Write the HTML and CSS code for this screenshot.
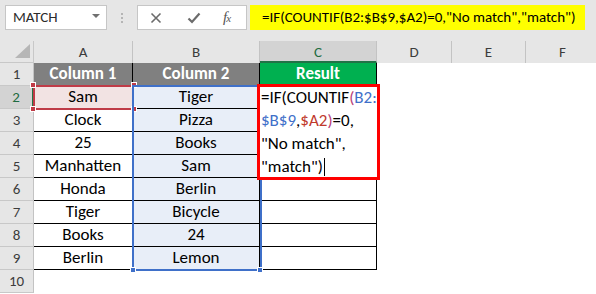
FILE: index.html
```html
<!DOCTYPE html>
<html>
<head>
<meta charset="utf-8">
<link rel="stylesheet" href="styles.css">
</head>
<body>
<div class="app">
  <div class="toolbar">
    <div class="namebox"><span>MATCH</span><svg class="dd" width="8" height="5" viewBox="0 0 8 5"><path d="M0 0H8L4 4Z" fill="#707070"/></svg></div>
    <div class="grip"><i></i><i></i><i></i></div>
    <div class="fxbox">
      <svg width="12" height="12" viewBox="0 0 12 12" class="ic-x"><path d="M1.5 1.5L10.5 10.5M10.5 1.5L1.5 10.5" stroke="#6b6b6b" stroke-width="1.6" fill="none"/></svg>
      <svg width="14" height="12" viewBox="0 0 14 12" class="ic-ok"><path d="M1.5 6.5L5 10L12.5 1.5" stroke="#6b6b6b" stroke-width="2.2" fill="none"/></svg>
      <span class="fx">f<small>x</small></span>
    </div>
    <div class="formula">=IF(COUNTIF(B2:$B$9,$A2)=0,"No match","match")</div>
  </div>

  <div class="sheet">
    <div class="corner"></div>
    <div class="colh">A</div>
    <div class="colh">B</div>
    <div class="colh active">C</div>
    <div class="colh">D</div>
    <div class="colh">E</div>
    <div class="colh">F</div>

    <div class="rowh">1</div>
    <div class="c hd">Column 1</div>
    <div class="c hd">Column 2</div>
    <div class="c hd green">Result</div>
    <div class="e"></div><div class="e"></div><div class="e"></div>

    <div class="rowh active">2</div>
    <div class="c pink">Sam</div>
    <div class="c blue">Tiger</div>
    <div class="c"></div>
    <div class="e"></div><div class="e"></div><div class="e"></div>

    <div class="rowh">3</div>
    <div class="c">Clock</div>
    <div class="c blue">Pizza</div>
    <div class="c"></div>
    <div class="e"></div><div class="e"></div><div class="e"></div>

    <div class="rowh">4</div>
    <div class="c">25</div>
    <div class="c blue">Books</div>
    <div class="c"></div>
    <div class="e"></div><div class="e"></div><div class="e"></div>

    <div class="rowh">5</div>
    <div class="c">Manhatten</div>
    <div class="c blue">Sam</div>
    <div class="c"></div>
    <div class="e"></div><div class="e"></div><div class="e"></div>

    <div class="rowh">6</div>
    <div class="c">Honda</div>
    <div class="c blue">Berlin</div>
    <div class="c"></div>
    <div class="e"></div><div class="e"></div><div class="e"></div>

    <div class="rowh">7</div>
    <div class="c">Tiger</div>
    <div class="c blue">Bicycle</div>
    <div class="c"></div>
    <div class="e"></div><div class="e"></div><div class="e"></div>

    <div class="rowh">8</div>
    <div class="c">Books</div>
    <div class="c blue">24</div>
    <div class="c"></div>
    <div class="e"></div><div class="e"></div><div class="e"></div>

    <div class="rowh">9</div>
    <div class="c">Berlin</div>
    <div class="c blue">Lemon</div>
    <div class="c"></div>
    <div class="e"></div><div class="e"></div><div class="e"></div>

    <div class="rowh">10</div>
    <div class="e"></div><div class="e"></div><div class="e"></div>
    <div class="e"></div><div class="e"></div><div class="e"></div>

    <div class="ref-a"></div>
    <span class="hdl hdl-red h-a1"></span>
    <span class="hdl hdl-red h-a2"></span>
    <span class="hdl hdl-red h-a3"></span>
    <span class="hdl hdl-red h-a4"></span>

    <div class="ref-b"></div>
    <span class="hdl hdl-blue h-b1"></span>
    <span class="hdl hdl-blue h-b2"></span>

    <div class="editor">
      <div>=IF(COUNTIF<span class="par">(</span><span class="rb">B2:</span></div>
      <div><span class="rb">$B$9</span>,<span class="rr">$A2</span><span class="par">)</span>=0,</div>
      <div>"No match",</div>
      <div>"match")<span class="caret"></span></div>
    </div>
    <div class="mark"></div>
  </div>
</div>
</body>
</html>
```
FILE: styles.css
```css
html, body {
  margin: 0;
  padding: 0;
  background: #ffffff;
}
.app {
  width: 596px;
  height: 294px;
  overflow: hidden;
  font-family: Carlito, "Liberation Sans", sans-serif;
}

/* ---------- toolbar ---------- */
.toolbar {
  height: 41px;
  background: #e6e6e6;
  box-sizing: border-box;
  padding: 5px 0 0 5px;
  display: flex;
  align-items: flex-start;
}
.namebox {
  width: 102px;
  height: 25px;
  box-sizing: border-box;
  background: #fff;
  border: 1px solid #c6c6c6;
  display: flex;
  align-items: center;
  justify-content: space-between;
  padding: 0 6px 1px 7px;
  font-size: 15px;
  color: #2b2b2b;
}
.namebox .dd { margin-top: -2px; }
.grip {
  width: 30px;
  height: 25px;
  display: flex;
  flex-direction: column;
  align-items: center;
  justify-content: center;
  gap: 2px;
}
.grip i {
  display: block;
  width: 2px;
  height: 2px;
  background: #b5b5b5;
}
.fxbox {
  width: 110px;
  height: 25px;
  box-sizing: border-box;
  background: #fff;
  border: 1px solid #c6c6c6;
  display: flex;
  align-items: center;
  padding-left: 12px;
}
.ic-x { margin-right: 25px; }
.ic-ok { margin-right: 22px; margin-top: 1px; }
.fx {
  font-family: "Liberation Serif", serif;
  font-style: italic;
  font-size: 15px;
  color: #555;
  letter-spacing: -1px;
}
.fx small { font-size: 11px; }
.formula {
  margin-left: 3px;
  width: 335px;
  height: 25px;
  box-sizing: border-box;
  background: #ffff00;
  padding-left: 12px;
  font-size: 15px;
  line-height: 24px;
  color: #000;
  white-space: nowrap;
}

/* ---------- sheet ---------- */
.sheet {
  position: relative;
  display: grid;
  grid-template-columns: 34px 99px 127px 117px 75px 74px 74px;
  grid-template-rows: 22px repeat(10, 23px);
}
.corner {
  background: #e6e6e6;
  border-right: 1px solid #c8c8c8;
  border-bottom: 1px solid #c8c8c8;
  box-sizing: border-box;
  position: relative;
}
.corner::after {
  content: "";
  position: absolute;
  right: 3px;
  bottom: 4px;
  width: 0;
  height: 0;
  border-left: 15px solid transparent;
  border-bottom: 14px solid #b6b6b6;
}
.colh {
  background: #e6e6e6;
  border-right: 1px solid #c3c3c3;
  box-sizing: border-box;
  text-align: center;
  font-size: 15px;
  line-height: 22px;
  color: #3c3c3c;
}
.colh.active {
  background: #d3d3d3;
  color: #1f6b41;
  border-bottom: 2px solid #217346;
}
.rowh {
  background: #e6e6e6;
  border-right: 1px solid #c3c3c3;
  border-bottom: 1px solid #c8c8c8;
  box-sizing: border-box;
  text-align: center;
  font-size: 15px;
  line-height: 22px;
  color: #3c3c3c;
}
.rowh.active {
  background: #d3d3d3;
  color: #1f6b41;
  border-right: 2px solid #217346;
}
.c {
  border-right: 1px solid #000;
  border-bottom: 1px solid #000;
  box-sizing: border-box;
  text-align: center;
  font-size: 17px;
  line-height: 22px;
  color: #000;
  white-space: nowrap;
}
.c.hd {
  background: #808080;
  color: #fff;
  font-weight: bold;
}
.c.hd.green { background: #00b050; }
.c.pink { background: #f2e3e3; }
.c.blue { background: #e8eef8; }
.e { background: #fff; }

/* ---------- overlays ---------- */
.ref-a {
  position: absolute;
  left: 33px;
  top: 44px;
  width: 101px;
  height: 25px;
  box-sizing: border-box;
  border: 2px solid #bf3b47;
}
.ref-b {
  position: absolute;
  left: 132px;
  top: 44px;
  width: 130px;
  height: 186px;
  box-sizing: border-box;
  border: 2px solid #3f70c9;
}
.hdl {
  position: absolute;
  width: 6px;
  height: 6px;
  box-sizing: border-box;
  border: 1px solid #fff;
}
.hdl-red { background: #bf3b47; }
.hdl-blue { background: #3f70c9; }
.h-a1 { left: 30px; top: 41px; }
.h-a2 { left: 131px; top: 41px; }
.h-a3 { left: 30px; top: 65px; }
.h-a4 { left: 131px; top: 65px; }
.h-b1 { left: 130px; top: 226px; }
.h-b2 { left: 257px; top: 226px; }

.editor {
  position: absolute;
  left: 260px;
  top: 45px;
  width: 117px;
  height: 92px;
  background: #fff;
  box-sizing: border-box;
  padding-left: 1px;
  font-size: 17px;
  line-height: 23px;
  color: #000;
  white-space: nowrap;
  overflow: visible;
}
.editor .par { color: #b9417a; }
.editor .rb { color: #3f70c9; }
.editor .rr { color: #c0392b; }
.caret {
  display: inline-block;
  width: 1px;
  height: 18px;
  background: #000;
  vertical-align: -4px;
  margin-left: 1px;
}
.mark {
  position: absolute;
  left: 257px;
  top: 43px;
  width: 123px;
  height: 96px;
  box-sizing: border-box;
  border: 3px solid #ff0000;
}
```
